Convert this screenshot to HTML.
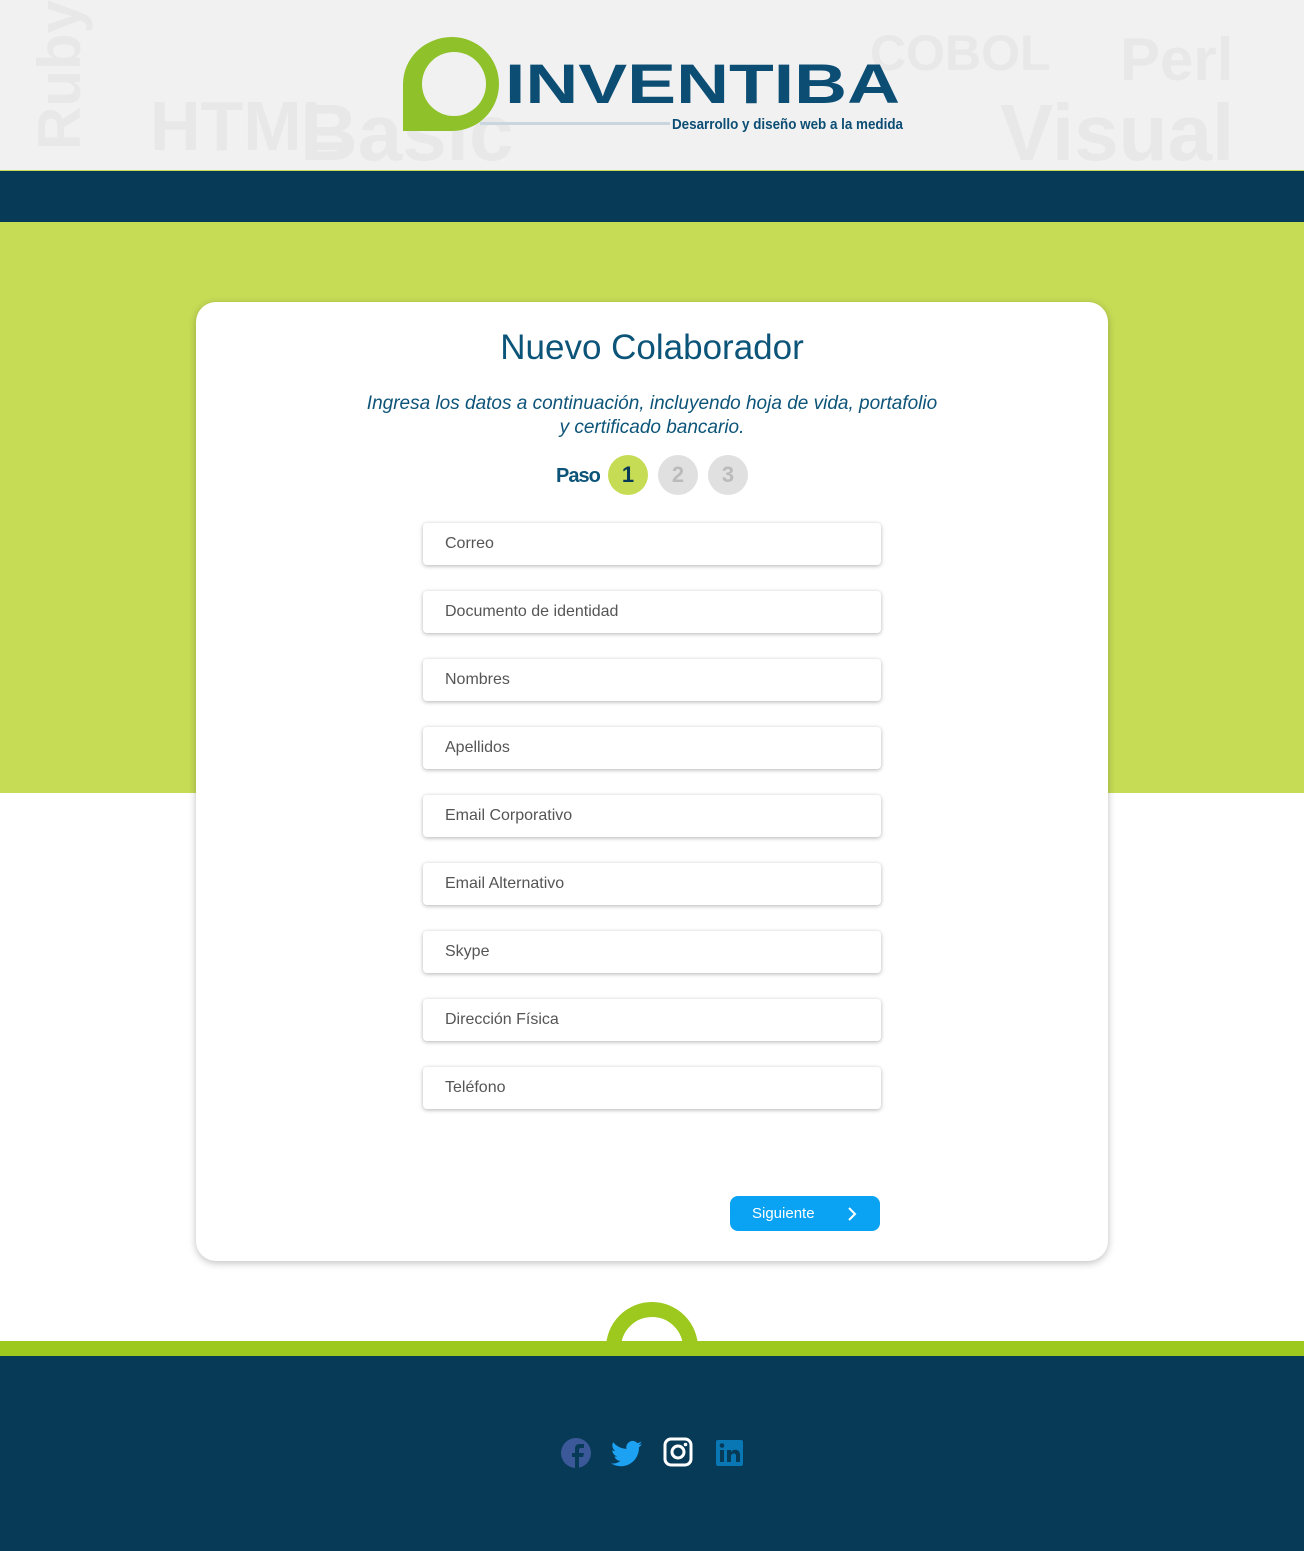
<!DOCTYPE html>
<html><head><meta charset="utf-8"><style>
*{margin:0;padding:0;box-sizing:border-box}
body{width:1304px;height:1551px;position:relative;overflow:hidden;background:#fff;font-family:"Liberation Sans",sans-serif}
.hdr{position:absolute;left:0;top:0;width:1304px;height:170px;background:#f1f1f1}
.navy{position:absolute;left:0;top:170px;width:1304px;height:52px;background:#063a56;border-top:1px solid #c7dc52}
.green{position:absolute;left:0;top:222px;width:1304px;height:571px;background:#c6dc55}
.card{position:absolute;left:196px;top:302px;width:912px;height:959px;background:#fff;border-radius:20px;box-shadow:0 2px 8px rgba(0,0,0,.25)}
h1{position:absolute;left:0;width:912px;top:26px;text-align:center;font-weight:normal;font-size:35px;color:#0d5479}
.sub{position:absolute;left:0;width:912px;top:90px;text-align:center;font-style:italic;font-size:19px;line-height:24px;color:#0d5479}
.paso{position:absolute;left:360px;top:163px;font-size:20px;color:#0d5479;font-weight:bold;letter-spacing:-1px}
.c{position:absolute;top:153px;width:40px;height:40px;border-radius:50%;text-align:center;line-height:40px;font-size:22px;font-weight:bold;color:#bbb;background:#e0e0e0}
.in{position:absolute;left:227px;width:458px;height:42px;border-radius:4px;box-shadow:0 1px 4px rgba(0,0,0,.3);font-size:16px;color:#555;padding:12px 22px}
.btn{position:absolute;left:534px;top:894px;width:150px;height:35px;border-radius:8px;background:#0aa2f3;color:#fff;font-size:15px;line-height:35px;padding-left:22px}
.foot{position:absolute;left:0;top:1356px;width:1304px;height:195px;background:#063a56}
.gl{position:absolute;left:0;top:1341px;width:1304px;height:15px;background:#9dc91e}
.ring{position:absolute;left:606px;top:1302px;width:92px;height:92px;border-radius:50%;border:15px solid #9dc91e}
</style></head><body>
<div class="hdr">
<svg width="1304" height="170" style="position:absolute;left:0;top:0">
<g font-family="Liberation Sans" font-weight="bold" fill="#e8e8e8">
<text x="10" y="160" font-size="60" transform="rotate(-90 40 120)">Ruby</text>
<text x="150" y="150" font-size="70">HTML</text>
<text x="300" y="160" font-size="80">Basic</text>
<text x="1000" y="160" font-size="80">Visual</text>
<text x="1120" y="80" font-size="60">Perl</text>
<text x="870" y="70" font-size="50">COBOL</text>
</g>
<path d="M452 37a47 47 0 1 1 0 94H403V84a49 47 0 0 1 49-47z" fill="#8fc22a"/>
<circle cx="454" cy="84" r="32" fill="#f1f1f1"/>
<text x="505" y="103" font-family="Liberation Sans" font-weight="bold" font-size="56" fill="#0c4d74" textLength="395" lengthAdjust="spacingAndGlyphs">INVENTIBA</text>
<rect x="480" y="122" width="190" height="3" fill="#c9d6e0"/>
<text x="672" y="129" font-family="Liberation Sans" font-weight="bold" font-size="15" fill="#0c4d74" textLength="231" lengthAdjust="spacingAndGlyphs">Desarrollo y diseño web a la medida</text>
</svg></div>
<div class="navy"></div>
<div class="green"></div>
<div class="card">
<h1>Nuevo Colaborador</h1>
<div class="sub">Ingresa los datos a continuación, incluyendo hoja de vida, portafolio<br>y certificado bancario.</div>
<div class="paso">Paso</div>
<div class="c" style="left:412px;background:#c6dc55;color:#063a56">1</div>
<div class="c" style="left:462px">2</div>
<div class="c" style="left:512px">3</div>
<div class="in" style="top:221px">Correo</div>
<div class="in" style="top:289px">Documento de identidad</div>
<div class="in" style="top:357px">Nombres</div>
<div class="in" style="top:425px">Apellidos</div>
<div class="in" style="top:493px">Email Corporativo</div>
<div class="in" style="top:561px">Email Alternativo</div>
<div class="in" style="top:629px">Skype</div>
<div class="in" style="top:697px">Dirección Física</div>
<div class="in" style="top:765px">Teléfono</div>
<div class="btn">Siguiente<svg width="12" height="14" style="position:absolute;left:116px;top:11px"><path d="M3 1l6 6-6 6" stroke="#fff" stroke-width="2" fill="none"/></svg></div>
</div>
<div class="ring"></div>
<div class="gl"></div>
<div class="foot">
<svg width="1304" height="195" style="position:absolute;left:0;top:0">
<circle cx="576" cy="97" r="15" fill="#3b5998"/>
<path d="M579 112v-11h4l1-4h-5v-3c0-1 .5-2 2-2h3v-4h-4c-4 0-5 2-5 5v4h-3v4h3v11z" fill="#063a56"/>
<g transform="translate(611 82) scale(1.3)">
<path d="M24 4.6c-.9.4-1.8.6-2.8.8 1-.6 1.8-1.6 2.2-2.7-1 .6-2 1-3.1 1.2a4.9 4.9 0 0 0-8.4 4.5C7.700 8.200 4.100 6.300 1.700 3.300c-1.300 2.300-.6 5.200 1.500 6.600-.8 0-1.600-.2-2.200-.6 0 2.400 1.700 4.400 3.900 4.800-.7.200-1.500.2-2.200.1.600 2 2.400 3.400 4.600 3.400A9.900 9.900 0 0 1 0 19.500 14 14 0 0 0 7.500 21.700c9.100 0 14.300-7.700 14-14.600 1-.7 1.800-1.600 2.500-2.500z" fill="#1da1f2"/></g>
<rect x="665" y="83" width="26" height="26" rx="6" fill="none" stroke="#fff" stroke-width="3"/>
<circle cx="678" cy="96" r="6" fill="none" stroke="#fff" stroke-width="3"/>
<circle cx="685.500" cy="88.500" r="1.800" fill="#fff"/>
<rect x="716" y="84" width="27" height="26" rx="2" fill="#0a77b5"/>
<rect x="720" y="94" width="4" height="12" fill="#063a56"/><circle cx="722" cy="89.500" r="2.300" fill="#063a56"/>
<path d="M727 94h4v2c1-1.500 2.500-2.300 4.500-2.300 3 0 4.500 2 4.500 5.500v6.800h-4v-6c0-1.500-.5-2.500-2-2.500s-3 1-3 2.800v5.700h-4z" fill="#063a56"/>
</svg></div>
</body></html>
